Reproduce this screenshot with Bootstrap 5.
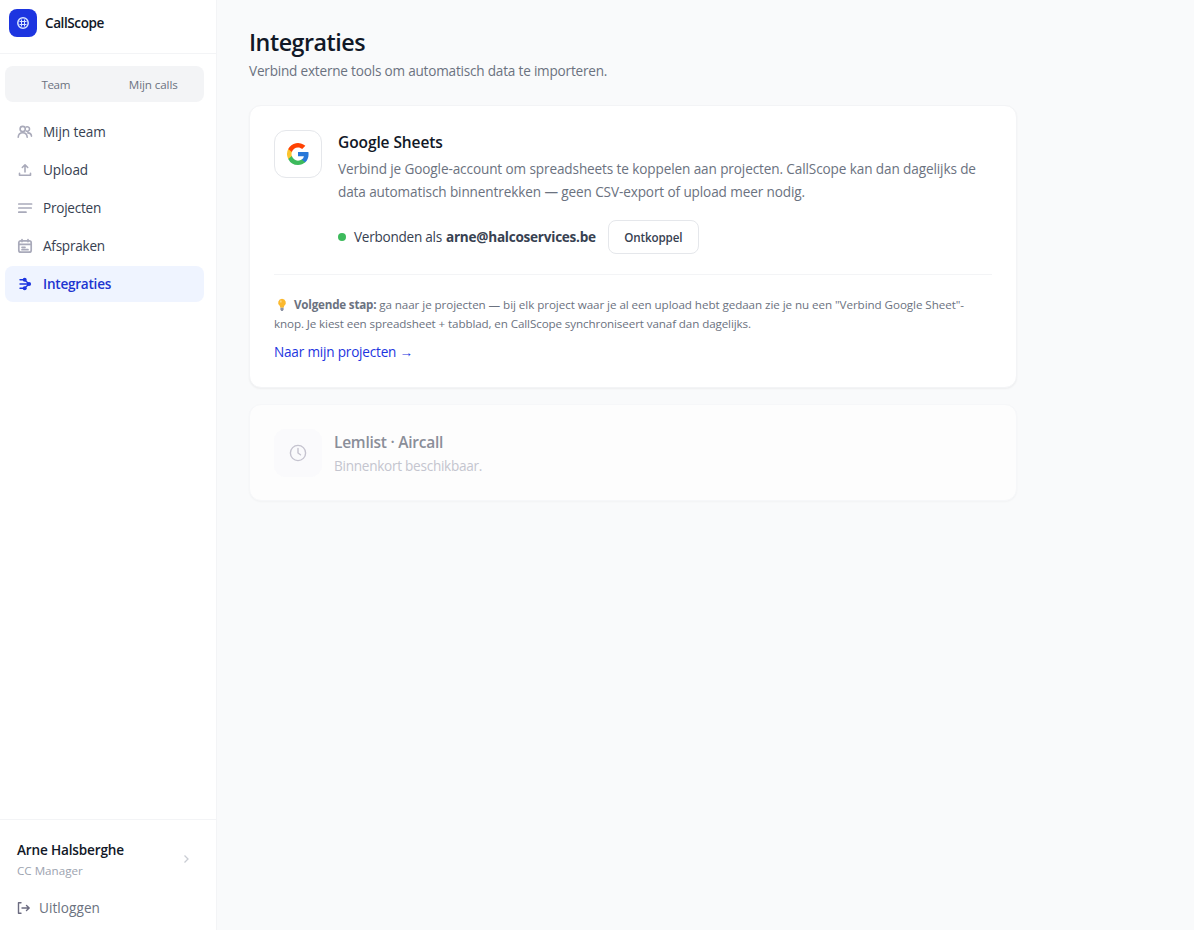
<!DOCTYPE html>
<html lang="nl">
<head>
<meta charset="utf-8">
<meta name="viewport" content="width=device-width, initial-scale=1">
<title>CallScope – Integraties</title>
<link href="https://cdn.jsdelivr.net/npm/bootstrap@5.3.0/dist/css/bootstrap.min.css" rel="stylesheet">
<style>
  body { font-family: "Open Sans", "Noto Sans", sans-serif; font-size: 13.58px; line-height: 20px; background: #f9fafb; color: #111827; overflow: hidden; }
  .ls-0 { letter-spacing: 0; } .ls-1 { letter-spacing: -.1px; } .ls-2 { letter-spacing: -.2px; } .ls-25 { letter-spacing: -.25px; } .ls-4 { letter-spacing: -.43px; }
  .fs-tiny { font-size: 11.64px; }
  .sidebar { width: 217px; background: #fff; border-right: 1px solid #f3f4f6; }
  .brand { height: 54px; padding: 0 9px 8px; border-bottom: 1px solid #f3f4f6; }
  .logo { width: 28px; height: 28px; border-radius: 8px; background: #1d35e0; }
  .switcher { margin: 12px 12px 12px 5px; height: 36px; border-radius: 8px; background: #f3f4f6; color: #6b7280; padding: 2px 2px 0; }
  .menu { margin: 0 12px 0 5px; gap: 2px; }
  .menu .nav-link { height: 36px; padding: 0 12px; gap: 10px; color: #374151; border-radius: 8px; }
  .menu .nav-link svg { color: #a9aaba; }
  .menu .nav-link.active { background: #eff4ff; color: #1d35d0; font-weight: 600; }
  .menu .nav-link.active svg { color: #1d35e0; }
  .account { border-top: 1px solid #f3f4f6; height: 111px; padding: 20px 12px 0 17px; }
  .person { letter-spacing: -.17px; }
  .role { color: #9ca3af; margin-top: 1px; }
  .logout { margin-top: 17px; color: #6b7280; letter-spacing: .06px; }
  main { padding: 28px 32px 0; }
  h1 { font-size: 23.28px; line-height: 28px; font-weight: 600; letter-spacing: -.48px; }
  .sub { color: #6b7280; margin: 5px 0 24px; letter-spacing: -.205px; }
  .panel { width: 768px; border: 1px solid #f3f4f6; border-radius: 12px; background: #fff; box-shadow: 0 1px 2px rgba(0,0,0,.05); padding: 24px; }
  .tile { width: 48px; height: 48px; border-radius: 12px; border: 1px solid #e5e7eb; }
  .panel h2 { font-size: 15.52px; line-height: 24px; font-weight: 600; }
  .desc { line-height: 23px; color: #6b7280; margin-top: 3px; letter-spacing: -.115px; white-space: nowrap; }
  .status { margin-top: 17px; color: #374151; letter-spacing: -.255px; }
  .dot { width: 8px; height: 8px; background: #3dba5c; }
  .btn-out { height: 34px; width: 91px; padding: 1px 0 0; border: 1px solid #e5e7eb; border-radius: 8px; font-size: 11.64px; font-weight: 600; color: #374151; background: #fff; margin-left: 12px; letter-spacing: -.15px; }
  .hint { border-top: 1px solid #f3f4f6; margin-top: 20px; padding: 20px 0 1px; font-size: 11.64px; line-height: 19px; color: #6b7280; white-space: nowrap; }
  .hint strong { letter-spacing: -.2px; }
  .hint-1 { letter-spacing: -.065px; }
  .hint-2 { letter-spacing: -.11px; }
  .go { color: #1d35e0; font-size: 13.58px; line-height: 20px; text-decoration: none; margin-top: 9px; }
  .soon { margin-top: 16px; height: 97px; gap: 12px; background: #fdfdfd; border-color: #f6f7f9; box-shadow: 0 1px 2px rgba(0,0,0,.03); }
  .soon .tile { background: #fafafc; border-color: #fafafc; }
  .soon h2 { color: #8a8e99; letter-spacing: -.26px; line-height: 26px; }
  .soon p { color: #c4c5cf; letter-spacing: -.27px; line-height: 22px; }
</style>
</head>
<body>
<div class="d-flex vh-100">
  <aside class="sidebar d-flex flex-column flex-shrink-0">
    <div class="brand d-flex align-items-center gap-2">
      <span class="logo d-flex align-items-center justify-content-center">
        <svg width="14" height="14" viewBox="0 0 14 14" fill="none" stroke="#d9e6ff"><circle cx="7" cy="7" r="5.200" stroke-width="1.500"/><path d="M5.500 3.500v7M8.500 3.500v7M3.500 5.500h7M3.500 8.500h7" stroke-width="1"/></svg>
      </span>
      <span class="fw-semibold ls-4">CallScope</span>
    </div>
    <div class="switcher fs-tiny d-flex align-items-center text-center">
      <span class="w-50 ls-4">Team</span><span class="w-50 ls-1">Mijn calls</span>
    </div>
    <nav class="menu nav flex-column">
      <a class="nav-link d-flex align-items-center ls-1" href="#"><svg width="16" height="16" viewBox="0 0 16 16" fill="none" stroke="currentColor" stroke-width="1.600" stroke-linecap="round"><circle cx="5.700" cy="5" r="2.600"/><path d="M9.300 2.900a2.300 2.300 0 1 1 0 4.200M1.200 13.200c.2-2.800 1.900-4.400 4.500-4.400s4.300 1.600 4.500 4.400M10.800 8.900c2.400 0 3.500 1.200 3.700 3.300"/></svg>Mijn team</a>
      <a class="nav-link d-flex align-items-center ls-1" href="#"><svg width="16" height="16" viewBox="0 0 16 16" fill="none" stroke="currentColor" stroke-width="1.600" stroke-linecap="round" stroke-linejoin="round"><path d="M8 10V3M5.300 5.500 8 2.800l2.700 2.700M2.500 11.300v1.900h11v-1.900"/></svg>Upload</a>
      <a class="nav-link d-flex align-items-center ls-25" href="#"><svg width="16" height="16" viewBox="0 0 16 16" fill="none" stroke="currentColor" stroke-width="1.700" stroke-linecap="round"><path d="M1.800 4h12.800M1.800 8h12.400M1.800 12.200H9"/></svg>Projecten</a>
      <a class="nav-link d-flex align-items-center ls-25" href="#"><svg width="16" height="16" viewBox="0 0 16 16" fill="none" stroke="currentColor" stroke-width="1.700" stroke-linecap="round"><rect x="1.800" y="2.800" width="12.400" height="11.400" rx="2"/><path d="M2 6.300h12M5 1.600v2M11 1.600v2M5 9.300h3M5 11.700h6"/></svg>Afspraken</a>
      <a class="nav-link active d-flex align-items-center ls-25" href="#"><svg width="16" height="16" viewBox="0 0 16 16" fill="none" stroke="currentColor" stroke-width="1.400" stroke-linecap="round"><path d="M3 3.800h4.500L11.500 7.500M3 8h9M3 12.200h4.500L11.500 8.500"/><g fill="currentColor" stroke="none"><circle cx="7.700" cy="3.800" r="2"/><circle cx="12" cy="8" r="2.100"/><circle cx="7.700" cy="12.200" r="2"/></g></svg>Integraties</a>
    </nav>
    <div class="account mt-auto">
      <div class="d-flex align-items-center justify-content-between pe-2">
        <div><div class="fw-semibold person">Arne Halsberghe</div><div class="role fs-tiny ls-0">CC Manager</div></div>
        <svg class="mb-1" width="20" height="12" viewBox="0 0 20 12" fill="none" stroke="#c9ccd3" stroke-width="1.300"><path d="M8.500 2.500 12 6 8.500 9.500"/></svg>
      </div>
      <div class="logout d-flex align-items-center gap-2">
        <svg width="14" height="14" viewBox="0 0 14 14" fill="none" stroke="#6b6b80" stroke-width="1.400" stroke-linecap="round" stroke-linejoin="round"><path d="M4 1.800H1.500v10.400H4M5 7h7M9.500 4.500 12.200 7 9.500 9.500"/></svg>Uitloggen
      </div>
    </div>
  </aside>
  <main class="flex-grow-1">
    <h1 class="mb-0">Integraties</h1>
    <p class="sub">Verbind externe tools om automatisch data te importeren.</p>
    <section class="panel">
      <div class="d-flex gap-3">
        <div class="tile flex-shrink-0 d-flex align-items-center justify-content-center">
          <svg width="24" height="24" viewBox="0 0 24 24"><path fill="#2878d8" d="M22.560 12.250c0-.78-.07-1.530-.2-2.250H12v4.260h5.920a5.060 5.060 0 0 1-2.200 3.320v2.770h3.570c2.080-1.920 3.270-4.740 3.270-8.100z"/><path fill="#3dba5c" d="M12 23c2.970 0 5.460-.98 7.280-2.660l-3.570-2.770c-.98.66-2.230 1.060-3.710 1.060-2.860 0-5.290-1.930-6.160-4.530H2.180v2.840A11 11 0 0 0 12 23z"/><path fill="#fcc42e" d="M5.840 14.090a6.600 6.600 0 0 1 0-4.180V7.070H2.180a11 11 0 0 0 0 9.860z"/><path fill="#ff4203" d="M12 5.380c1.620 0 3.060.56 4.210 1.640l3.150-3.150A11 11 0 0 0 2.180 7.070l3.660 2.840C6.710 7.310 9.140 5.380 12 5.380z"/></svg>
        </div>
        <div>
          <h2 class="mb-0 ls-1">Google Sheets</h2>
          <p class="desc mb-0">Verbind je Google-account om spreadsheets te koppelen aan projecten. CallScope kan dan dagelijks de<br>data automatisch binnentrekken — geen CSV-export of upload meer nodig.</p>
          <div class="status d-flex align-items-center">
            <span class="dot rounded-circle me-2"></span>
            <span class="me-1">Verbonden als</span><strong>arne@halcoservices.be</strong>
            <button class="btn btn-out" type="button">Ontkoppel</button>
          </div>
        </div>
      </div>
      <div class="hint">
        <div class="d-flex align-items-center"><svg class="me-1" width="16" height="14" viewBox="0 0 16 14"><path fill="#fbb92f" d="M8 .8a3.900 3.900 0 0 0-2.300 7l.7 2h3.200l.7-2A3.900 3.900 0 0 0 8 .8z"/><path fill="#fff" fill-opacity=".5" d="M6.200 2.500h1.300v2H6.200z"/><path fill="#8d93a5" d="M6.400 9.800h3.200v1.700L8.800 13H7.200l-.8-1.500z"/></svg><strong>Volgende stap:&nbsp;</strong><span class="hint-1">ga naar je projecten — bij elk project waar je al een upload hebt gedaan zie je nu een "Verbind Google Sheet"-</span></div>
        <div class="hint-2">knop. Je kiest een spreadsheet + tabblad, en CallScope synchroniseert vanaf dan dagelijks.</div>
        <a class="go d-inline-block ls-2" href="#">Naar mijn projecten →</a>
      </div>
    </section>
    <section class="panel soon d-flex">
      <div class="tile flex-shrink-0 d-flex align-items-center justify-content-center">
        <svg width="18" height="18" viewBox="0 0 18 18" fill="none" stroke="#c5c3cf" stroke-width="1.400" stroke-linecap="round" stroke-linejoin="round"><circle cx="9" cy="9" r="7.600"/><path d="M9 4.500V9l2.500 1.800"/></svg>
      </div>
      <div>
        <h2 class="mb-0">Lemlist · Aircall</h2>
        <p class="mb-0">Binnenkort beschikbaar.</p>
      </div>
    </section>
  </main>
</div>
<script src="https://cdn.jsdelivr.net/npm/bootstrap@5.3.0/dist/js/bootstrap.bundle.min.js"></script>
</body>
</html>
